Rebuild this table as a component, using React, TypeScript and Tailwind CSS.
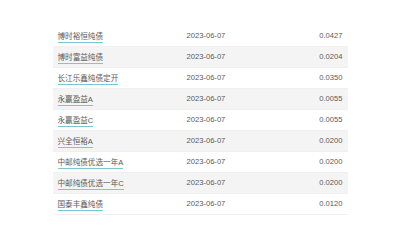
const rows = [
  { name: '博时裕恒纯债', date: '2023-06-07', value: '0.0427' },
  { name: '博时富益纯债', date: '2023-06-07', value: '0.0204' },
  { name: '长江乐鑫纯债定开', date: '2023-06-07', value: '0.0350' },
  { name: '永赢盈益A', date: '2023-06-07', value: '0.0055' },
  { name: '永赢盈益C', date: '2023-06-07', value: '0.0055' },
  { name: '兴全恒裕A', date: '2023-06-07', value: '0.0200' },
  { name: '中邮纯债优选一年A', date: '2023-06-07', value: '0.0200' },
  { name: '中邮纯债优选一年C', date: '2023-06-07', value: '0.0200' },
  { name: '国泰丰鑫纯债', date: '2023-06-07', value: '0.0120' },
]

export default function App() {
  return (
    <div className="w-[400px] h-[250px] bg-white pt-[26px] font-['Liberation_Sans','Noto_Sans_CJK_SC',sans-serif]">
      <div className="mx-auto w-[295px] text-[7.6px] text-[#5a5a5a]">
        {rows.map((r, i) => (
          <div
            key={i}
            className={`flex items-center h-[21px] border-b border-[#f0f0f0] ${i % 2 === 1 ? 'bg-[#f4f4f4]' : 'bg-white'}`}
          >
            <div className="w-[134px] pl-[5px]">
              <a className="inline-block leading-[9px] pt-[2px] pb-[1px] border-b border-[#7cc6cf] text-[#5a5a5a]">{r.name}</a>
            </div>
            <div className="flex-1">{r.date}</div>
            <div className="pr-[5px] text-right">{r.value}</div>
          </div>
        ))}
      </div>
    </div>
  )
}
